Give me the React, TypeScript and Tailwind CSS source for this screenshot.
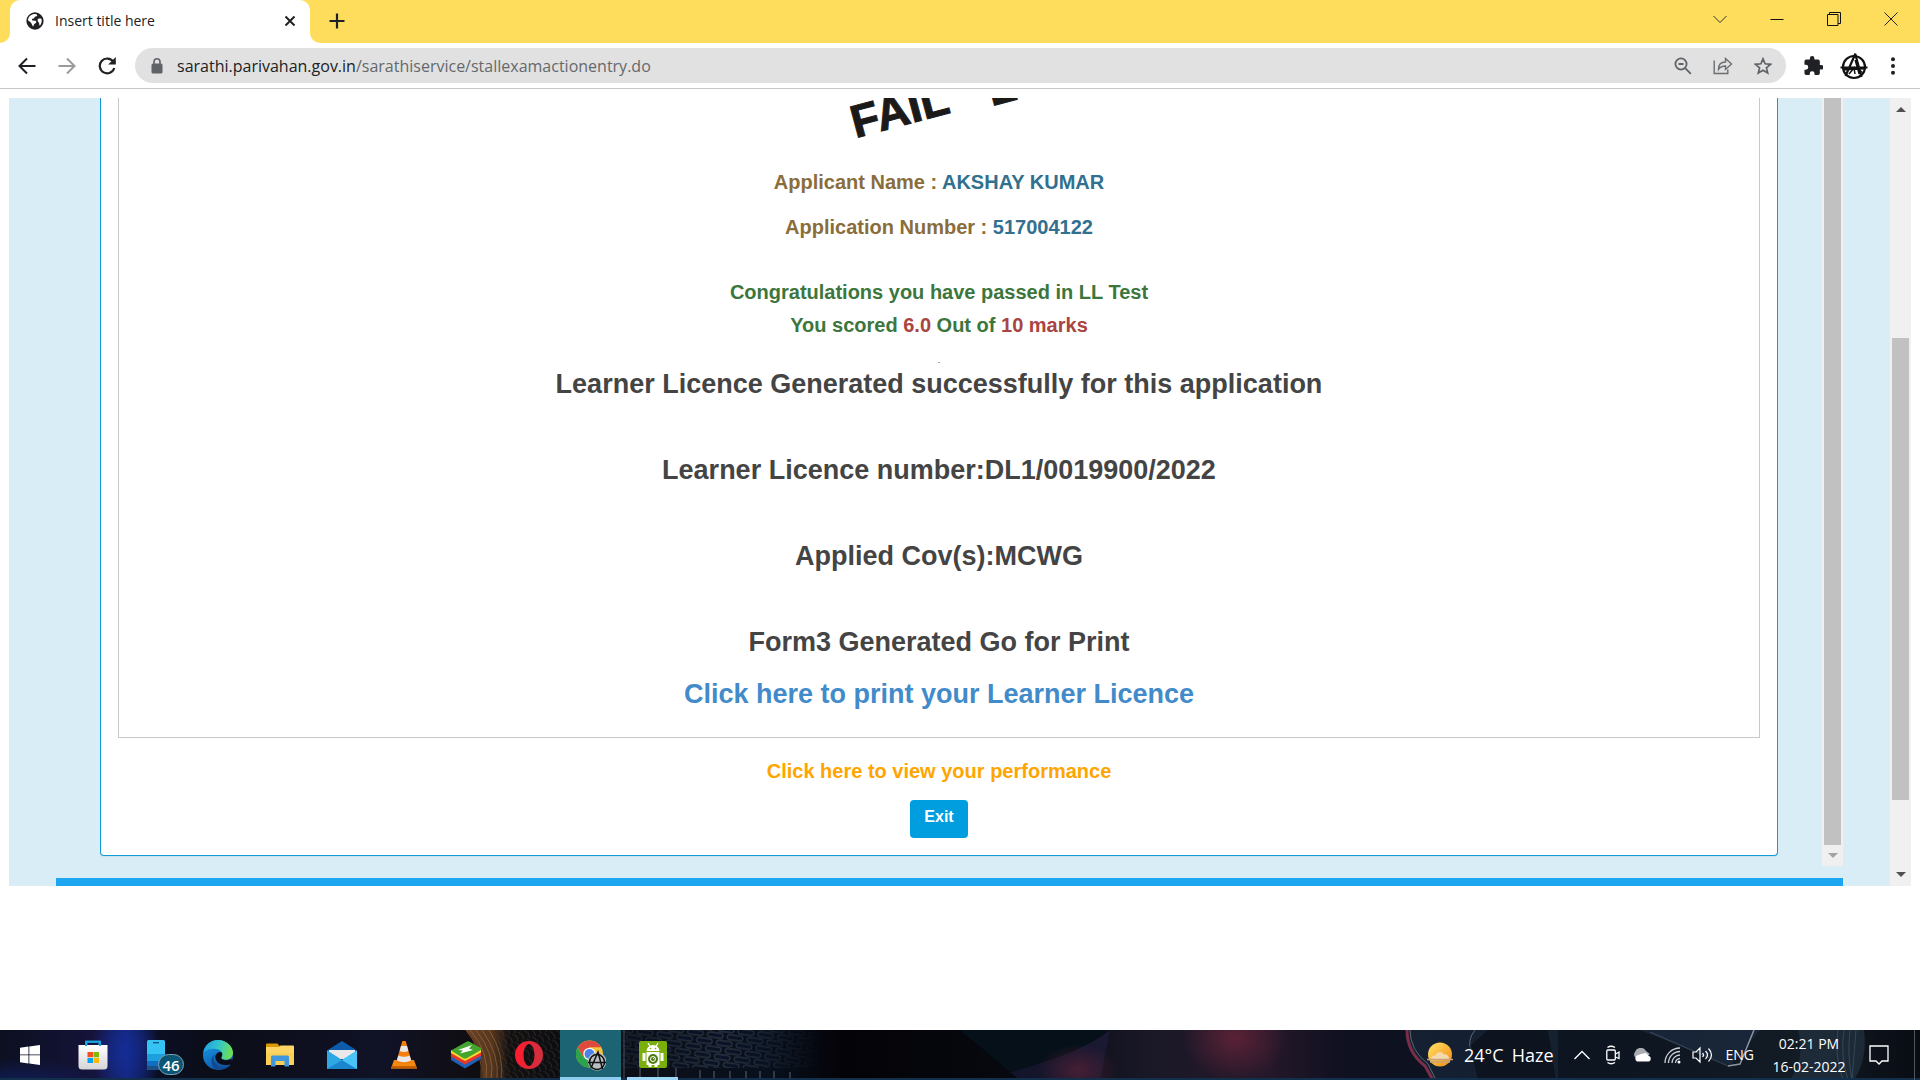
import React from "react";

function Globe() {
  return (
    <svg viewBox="0 0 20 20" className="size-[18px]" aria-hidden="true">
      <circle cx="10" cy="10" r="9.6" fill="#202124" />
      <path d="M10 2.2c2.600 0 3 1.200 2 2.200-.8.8-2.600.4-2.600 1.800 0 1.600-2.800.6-2.800 2.400 0 1.400 3.400.6 4.400 1.400 1.400 1-.2 2.600-1.600 3.200-1.200.5-.6 2-1.400 2.800-1.600-1.200-1.400-3.400-3-4.600C3.800 10.500 2.200 10 2.200 9 2.500 5 6 2.200 10 2.200zM13.500 7.500c1.400-.5 2.800-.6 3.600.1.900 2.800.3 5.400-1.700 7.600-1-.6-.4-2.400-1.200-3.400-.8-1-2.200-3-.7-4.300z" fill="#fff" />
    </svg>
  );
}

function Anarchy({ className }: { className: string }) {
  return (
    <svg viewBox="0 0 28 28" className={className} fill="none" stroke="#111" aria-hidden="true">
      <circle cx="14" cy="15" r="11" strokeWidth="2.200" />
      <path d="M5.500 24 15.500 1.500M15.300 2 21.500 25M15.500 8l4 14M0.500 15.500h27M4 17.500l20-1" strokeWidth="2.200" />
      <path d="M9 22l5-6 1 6M17 16l6 5" strokeWidth="1.500" />
    </svg>
  );
}

function TabStrip() {
  return (
    <header className="flex h-[43px] shrink-0 items-stretch bg-[#ffdd5c] text-[#202124]">
      <div className="flex w-[10px] bg-white">
        <span className="flex-1 rounded-br-[10px] bg-[#ffdd5c]" />
      </div>
      <div className="flex w-[300px] bg-[#ffdd5c]">
        <div className="flex flex-1 items-center rounded-t-[10px] bg-white pl-4 pr-3 pb-[2px]">
          <Globe />
          <span className="ml-[11px] flex-1 font-['Open_Sans','Noto_Sans',sans-serif] text-sm">Insert title here</span>
          <button type="button" aria-label="Close tab" className="flex size-4 items-center justify-center">
            <svg viewBox="0 0 12 12" className="size-3" stroke="#202124" strokeWidth="2"><path d="M1.500 1.500l9 9M10.500 1.500l-9 9" /></svg>
          </button>
        </div>
      </div>
      <div className="flex w-[10px] bg-white">
        <span className="flex-1 rounded-bl-[10px] bg-[#ffdd5c]" />
      </div>
      <button type="button" aria-label="New tab" className="ml-[7px] flex w-5 items-center justify-center pb-px">
        <svg viewBox="0 0 16 16" className="size-4" stroke="#202124" strokeWidth="2.200"><path d="M8 0.500v15M.5 8h15" /></svg>
      </button>
      <div className="flex-1" />
      <div className="flex items-center pr-px pb-[6px]">
        <button type="button" aria-label="Search tabs" className="flex w-[57px] justify-center">
          <svg viewBox="0 0 14 14" className="size-[14px]" fill="none" stroke="#333"><path d="M.5 4l6.500 6.500L13.500 4" /></svg>
        </button>
        <button type="button" aria-label="Minimize" className="flex w-[57px] justify-center">
          <svg viewBox="0 0 14 14" className="size-[14px]" stroke="#111"><path d="M.5 7.500h13" /></svg>
        </button>
        <button type="button" aria-label="Restore" className="flex w-[57px] justify-center">
          <svg viewBox="0 0 14 14" className="size-[14px]" fill="none" stroke="#111"><path d="M.5 2.500h10.500v11H.5zM2.500 2.500v-2h11v11h-2.500" /></svg>
        </button>
        <button type="button" aria-label="Close" className="flex w-[57px] justify-center">
          <svg viewBox="0 0 14 14" className="size-[14px]" stroke="#222"><path d="M.5.5l13 13M13.500.5l-13 13" /></svg>
        </button>
      </div>
    </header>
  );
}

function Toolbar() {
  return (
    <nav className="flex h-[46px] shrink-0 items-center border-b border-[#c8c8c8] bg-white">
      <button type="button" aria-label="Back" className="flex w-10 justify-center pl-[14px]">
        <svg viewBox="0 0 18 18" className="size-[18px]" fill="none" stroke="#202124" strokeWidth="2"><path d="M17.500 9H2M9 1.500L1.500 9 9 16.500" /></svg>
      </button>
      <button type="button" aria-label="Forward" className="flex w-10 justify-center pl-[14px]">
        <svg viewBox="0 0 18 18" className="size-[18px]" fill="none" stroke="#9a9b9d" strokeWidth="2"><path d="M.5 9H16M9 1.500L16.500 9 9 16.500" /></svg>
      </button>
      <button type="button" aria-label="Reload" className="flex w-10 justify-center pl-[14px]">
        <svg viewBox="0 0 18 18" className="size-[18px]" fill="none" stroke="#202124" strokeWidth="2.200"><path d="M15.200 4.600A7.400 7.400 0 1 0 16.300 11" /><path d="M17.800 0v7.600h-7.600z" fill="#202124" stroke="none" /></svg>
      </button>
      <div className="ml-[15px] flex h-[35px] flex-1 items-center rounded-full bg-[#e1e1e1] pl-4 pr-[3px]">
        <svg viewBox="0 0 12 16" className="h-4 w-3" aria-hidden="true"><rect x="0.500" y="5.500" width="11" height="10" rx="1.500" fill="#5f6368" /><path d="M3 6V3.800a3 3 0 0 1 6 0V6" fill="none" stroke="#5f6368" strokeWidth="1.600" /></svg>
        <div className="ml-[14px] flex-1 font-['Open_Sans','Noto_Sans',sans-serif] text-base leading-6 text-[#65686c]">
          <span className="text-[#202124]">sarathi.parivahan.gov.in</span>/sarathiservice/stallexamactionentry.do
        </div>
        <button type="button" aria-label="Zoom" className="flex w-10 justify-center">
          <svg viewBox="0 0 18 18" className="size-[18px]" fill="none" stroke="#5f6368" strokeWidth="1.800"><circle cx="7" cy="7" r="5.600" /><path d="M11.200 11.200l5.600 5.600M4.500 7h5" /></svg>
        </button>
        <button type="button" aria-label="Share" className="flex w-10 justify-center">
          <svg viewBox="0 0 20 18" className="h-[18px] w-5" fill="none" stroke="#6b6e72" strokeWidth="1.400"><path d="M1.200 3.500v13h13.600v-4M5.500 12.500c0-5 2.500-7.500 7-7.500V1.500L18.500 7l-6 5.500V9c-3.500 0-5.500 1-7 3.500z" /></svg>
        </button>
        <button type="button" aria-label="Bookmark" className="flex w-10 justify-center">
          <svg viewBox="0 0 18 18" className="size-[18px]" fill="none" stroke="#5f6368" strokeWidth="1.700"><path d="M9 1.800l2.100 5 5.400.5-4.100 3.500 1.300 5.300L9 13.300l-4.700 2.800 1.300-5.300-4.100-3.500 5.400-.5z" /></svg>
        </button>
      </div>
      <button type="button" aria-label="Extensions" className="flex w-[54px] justify-center">
        <svg viewBox="1.500 1 21 21" className="size-[19px]" fill="#202124"><path d="M20.500 11H19V7a2 2 0 0 0-2-2h-4V3.500a2.500 2.500 0 0 0-5 0V5H4a2 2 0 0 0-2 2v3.800h1.500a2.700 2.700 0 0 1 0 5.400H2V20a2 2 0 0 0 2 2h3.800v-1.500a2.700 2.700 0 0 1 5.400 0V22H17a2 2 0 0 0 2-2v-4h1.500a2.500 2.500 0 0 0 0-5z" /></svg>
      </button>
      <button type="button" aria-label="Profile"><Anarchy className="size-7" /></button>
      <button type="button" aria-label="Menu" className="mr-[22px] ml-5 flex w-[10px] justify-center">
        <svg viewBox="0 0 4 18" className="h-[18px] w-1" fill="#202124"><circle cx="2" cy="2.300" r="2" /><circle cx="2" cy="9" r="2" /><circle cx="2" cy="15.700" r="2" /></svg>
      </button>
    </nav>
  );
}

function Stamp() {
  return (
    <div aria-hidden="true" className="relative h-[46px] w-[200px] self-center overflow-hidden text-[46px] leading-[44px] font-bold text-[#1c1a19] [-webkit-text-stroke:1px_#1c1a19]">
      <span className="absolute top-[2px] left-[18px] origin-bottom-left rotate-[-15deg]">FAIL</span>
      <span className="absolute top-[-30px] left-[154px] origin-bottom-left rotate-[-15deg]">L</span>
    </div>
  );
}

function Result() {
  return (
    <main className="flex flex-1 justify-center pl-[91px] pr-[44px]">
      <section className="flex flex-1 flex-col self-start rounded-b-[4px] border border-t-0 border-[#0f9bd7] bg-white px-[17px] pb-[17px] text-center shadow-[0_1px_1px_rgba(0,0,0,0.05)]">
        <div className="flex flex-col border border-t-0 border-[#c8c8c8] pb-[23px]">
          <Stamp />
          <p className="mt-[23px] text-xl leading-[30px] font-bold text-[#8a6d3b]">Applicant Name : <span className="text-[#31708f]">AKSHAY KUMAR</span></p>
          <p className="mt-[15px] text-xl leading-[30px] font-bold text-[#8a6d3b]">Application Number : <span className="text-[#31708f]">517004122</span></p>
          <p className="mt-[34px] text-xl leading-[33px] font-bold text-[#3c763d]">Congratulations you have passed in LL Test<br />You scored <span className="text-[#a94442]">6.0</span> Out of <span className="text-[#a94442]">10 marks</span></p>
          <span className="mt-5 h-px w-[2px] self-center bg-[#b5a583]" />
          <h2 className="mt-px text-[27px] leading-[40px] font-bold text-[#444]">Learner Licence Generated successfully for this application</h2>
          <h2 className="mt-[46px] text-[27px] leading-[40px] font-bold text-[#444]">Learner Licence number:DL1/0019900/2022</h2>
          <h2 className="mt-[46px] text-[27px] leading-[40px] font-bold text-[#444]">Applied Cov(s):MCWG</h2>
          <h2 className="mt-[46px] text-[27px] leading-[40px] font-bold text-[#444]">Form3 Generated Go for Print</h2>
          <a href="#print" className="mt-3 self-center text-[27px] leading-[40px] font-bold text-[#428bca]">Click here to print your Learner Licence</a>
        </div>
        <a href="#performance" className="mt-[18px] self-center text-xl leading-[30px] font-bold text-[#ffa500]">Click here to view your performance</a>
        <button type="button" className="mt-[14px] h-[38px] self-center rounded-[4px] bg-[#009ddf] px-[14px] pb-1 text-base leading-6 font-bold text-white">Exit</button>
      </section>
    </main>
  );
}

function Arrow({ down, color }: { down?: boolean; color: string }) {
  return (
    <svg viewBox="0 0 10 5" className="h-[5px] w-[10px]" fill={color} aria-hidden="true">
      <path d={down ? "M0 0h10L5 5z" : "M0 5h10L5 0z"} />
    </svg>
  );
}

function Page() {
  return (
    <div className="mx-[9px] mt-[9px] flex h-[788px] shrink-0 bg-[#d9edf6]">
      <div className="flex flex-1 flex-col">
        <div className="flex flex-1 justify-end pr-[47px]">
          <div className="flex flex-1"><Result /></div>
          <div className="flex h-[768px] w-[21px] flex-col items-center bg-[#f0f0f0]">
            <div className="h-[747px] w-[17px] bg-[#c1c1c1]" />
            <div className="flex flex-1 items-center"><Arrow down color="#a3a3a3" /></div>
          </div>
        </div>
        <div className="mr-[47px] ml-[47px] h-2 shrink-0 bg-[#1ca6f0]" />
      </div>
      <div className="flex w-[21px] flex-col items-center bg-[#f0f0f0]">
        <div className="flex h-[22px] items-center"><Arrow color="#505050" /></div>
        <div className="mt-[218px] h-[462px] w-[17px] bg-[#c1c1c1]" />
        <div className="flex-1" />
        <div className="flex h-6 items-center"><Arrow down color="#505050" /></div>
      </div>
    </div>
  );
}

function Wallpaper() {
  return (
    <svg viewBox="0 0 1920 50" preserveAspectRatio="none" className="absolute inset-0 h-full w-full" aria-hidden="true">
      <defs>
        <linearGradient id="base">
          <stop offset="0" stopColor="#0c1020" /><stop offset=".05" stopColor="#15133a" /><stop offset=".066" stopColor="#14267c" /><stop offset=".082" stopColor="#0b0f24" />
          <stop offset=".11" stopColor="#0b0d17" /><stop offset=".2" stopColor="#101226" /><stop offset=".25" stopColor="#100d10" /><stop offset=".4" stopColor="#08101d" />
          <stop offset=".44" stopColor="#040307" /><stop offset=".53" stopColor="#06090f" /><stop offset=".6" stopColor="#1a1828" /><stop offset=".66" stopColor="#25182a" />
          <stop offset=".7" stopColor="#0f1020" /><stop offset=".76" stopColor="#0d1320" /><stop offset=".86" stopColor="#0e1622" /><stop offset=".94" stopColor="#131b25" /><stop offset="1" stopColor="#090c13" />
        </linearGradient>
        <radialGradient id="blue"><stop offset="0" stopColor="#142d96" stopOpacity=".9" /><stop offset="1" stopColor="#142d96" stopOpacity="0" /></radialGradient>
        <radialGradient id="red"><stop offset="0" stopColor="#652338" stopOpacity=".85" /><stop offset="1" stopColor="#652338" stopOpacity="0" /></radialGradient>
        <linearGradient id="copper"><stop offset="0" stopColor="#6b4228" /><stop offset=".28" stopColor="#54361f" /><stop offset=".45" stopColor="#14100f" /><stop offset="1" stopColor="#0c0c10" /></linearGradient>
        <pattern id="weave" width="6" height="9" patternUnits="userSpaceOnUse" patternTransform="rotate(-18)"><path d="M0 0q5 4 3 9" fill="none" stroke="#4b4a50" strokeWidth=".8" opacity=".6" /></pattern>
        <pattern id="mesh" width="20" height="14" patternUnits="userSpaceOnUse" patternTransform="rotate(8)"><rect x="1" y="1" width="16" height="5" rx="2.500" fill="#0a1426" stroke="#3c4656" /><rect x="-9" y="8" width="16" height="5" rx="2.500" fill="#0a1426" stroke="#3c4656" /><rect x="11" y="8" width="16" height="5" rx="2.500" fill="#0a1426" stroke="#3c4656" /></pattern>
        <linearGradient id="fade"><stop offset="0" stopColor="#777" /><stop offset=".5" stopColor="#fff" /><stop offset="1" stopColor="#000" /></linearGradient>
        <mask id="meshMask"><rect x="622" width="200" height="50" fill="url(#fade)" /></mask>
      </defs>
      <rect width="1920" height="50" fill="url(#base)" />
      <ellipse cx="125" cy="22" rx="36" ry="44" fill="url(#blue)" />
      <ellipse cx="10" cy="55" rx="100" ry="28" fill="url(#blue)" opacity=".5" />
      <path d="M466 0h95v50h-79q2-30-16-50z" fill="url(#copper)" />
      <path d="M466 0q18 22 15 50M470 0q20 22 16 50M476 0q20 25 15 50M482 0q18 25 15 50M489 0q16 25 12 50" fill="none" stroke="#a8713f" strokeWidth="1" opacity=".6" />
      <rect x="498" width="64" height="50" fill="url(#weave)" />
      <rect x="622" width="200" height="38" fill="url(#mesh)" mask="url(#meshMask)" />
      <path d="M624 0v50" stroke="#44505f" />
      <path d="M640 50v-12M658 50v-14M676 50v-12M700 50v-10M714 50v-9M730 50v-9M746 50v-9M760 50v-9M774 50v-9M790 50v-8" stroke="#3c4859" strokeWidth="1.500" />
      <path d="M1110 0L1010 42l10 8h80z" fill="#202044" opacity=".5" />
      <path d="M960 0h150q-30 24-100 42z" fill="#061019" />
      <ellipse cx="1078" cy="40" rx="40" ry="26" fill="url(#red)" opacity=".7" />
      <ellipse cx="1235" cy="8" rx="52" ry="44" fill="url(#red)" />
      <path d="M1407 0q0 22 20 38l6 12h125V0z" fill="#1c2b40" opacity=".55" />
      <path d="M1407 0q0 22 18 36l8 14" fill="none" stroke="#7a2e48" strokeWidth="3" />
      <path d="M1410 0q0 20 18 34l8 16M1475 0q-8 10-4 20" fill="none" stroke="#7d8696" opacity=".7" />
      <path d="M1478 50l-8-34 18-16h60l8 50z" fill="#0b1019" opacity=".75" />
      <path d="M1640 0l90 36 30-36z" fill="#1c2b40" opacity=".75" />
      <path d="M1728 36l12-2 14-34" fill="none" stroke="#8b94a0" strokeWidth="1.500" />
      <path d="M1650 2l78 34" fill="none" stroke="#4c5868" opacity=".7" />
      <path d="M1790 50q16-24 8-50h66q4 28-10 50z" fill="#223242" opacity=".7" />
      <path d="M1838 0q-4 25 5 50M1844 0q-4 25 4 50M1850 0q-3 25 2 50M1856 0q-2 25-4 50" fill="none" stroke="#5f7284" strokeWidth=".8" opacity=".5" />
      <rect y="48" width="1920" height="2" fill="#12304b" />
    </svg>
  );
}

function StartIcon() {
  return <svg viewBox="0 0 20 20" className="size-5" fill="#fff"><path d="M0 2.800L8.500 1.600v7.800H0zM9.300 1.500L20 0v9.400H9.300zM0 10.300h8.500v8.200L0 17.300zM9.300 10.300H20V20L9.300 18.600z" /></svg>;
}
function StoreIcon() {
  return (
    <svg viewBox="0 0 30 30" className="size-[30px]">
      <defs><linearGradient id="bag" x2="0" y2="1"><stop offset="0" stopColor="#fff" /><stop offset="1" stopColor="#d5d5d7" /></linearGradient></defs>
      <path d="M8.500 8V1.800h13V8" fill="none" stroke="#1da3e0" strokeWidth="2" />
      <path d="M.5 5h29v21a3.500 3.500 0 0 1-3.500 3.500H4A3.500 3.500 0 0 1 .5 26z" fill="url(#bag)" />
      <path d="M8 6V1.800h14V6" fill="none" stroke="#1da3e0" strokeWidth="2" />
      <path d="M9.500 12H15v5.200H9.500z" fill="#f25022" /><path d="M15.500 12H21v5.200h-5.500z" fill="#7fba00" /><path d="M9.500 18H15v5H9.500z" fill="#00a4ef" /><path d="M15.500 18H21v5h-5.500z" fill="#ffb900" />
    </svg>
  );
}
function PhoneIcon() {
  return (
    <svg viewBox="0 0 18 30" className="h-[30px] w-[18px]">
      <rect width="18" height="30" rx="1.500" fill="#35c3f3" /><path d="M0 14h18v7H0z" fill="#1f9ede" /><path d="M0 21h18v5H0z" fill="#0f6fc0" /><path d="M0 26h18v2.500a1.500 1.500 0 0 1-1.500 1.500h-15A1.500 1.500 0 0 1 0 28.500z" fill="#1d5185" /><path d="M6 2.700h6" stroke="#0e4a78" strokeWidth="1.200" />
    </svg>
  );
}
function EdgeIcon() {
  return (
    <svg viewBox="0 0 30 30" className="size-[30px]">
      <defs>
        <linearGradient id="e1" x1="0" y1=".3" x2="1" y2=".5"><stop offset="0" stopColor="#1f9ee0" /><stop offset=".5" stopColor="#34c6c9" /><stop offset="1" stopColor="#6fe04c" /></linearGradient>
        <linearGradient id="e2" x1="0" y1="0" x2=".5" y2="1"><stop offset="0" stopColor="#1b9fe6" /><stop offset="1" stopColor="#0c59b0" /></linearGradient>
      </defs>
      <circle cx="15" cy="15" r="15" fill="url(#e2)" />
      <path d="M.3 12.500C1.500 5.200 7.500 0 15 0c9 0 15 6.800 15 12.800 0 4.200-3 7-7 7-3 0-4.800-1.200-4.800-2.200 0-.7 1-1.200 1-3.200 0-2.800-3-5.600-8-5.600-4.700 0-8.700 1.500-10.900 3.700z" fill="url(#e1)" />
      <path d="M11.500 14c-3 6 2.500 13.500 9.500 13.500 2.300 0 4.500-.8 6-2C24 28.500 20 30.200 15.500 30 9 29 5.500 20 11.500 14z" fill="#124a92" />
      <path d="M12 16.500c1-3 3.500-5 6-4.500 1.500.8 1.600 3 .8 4.500-1 1.200-.6 2.300.8 3 2.600 1.200 6 .8 8.600-.8L30 24l-3 1c-6 2.500-14-.5-15-8.500z" fill="#0b0e18" />
      <path d="M12 17c.5 5.500 7 9.500 14.600 7.500q1.400-.5.600 1c-5 4-15.600 1-15.200-8.500z" fill="#14559f" />
    </svg>
  );
}
function FolderIcon() {
  return (
    <svg viewBox="0 0 28 24" className="h-6 w-7">
      <path d="M0 1.500A1 1 0 0 1 1 .5h10.500L14 3.500V8H0z" fill="#d99a00" /><path d="M0 4h13l1.500-1.500H27a1 1 0 0 1 1 1V21a1 1 0 0 1-1 1H0z" fill="#fdd565" /><path d="M0 10h28v11a1 1 0 0 1-1 1H0z" fill="#fbcf55" />
      <path d="M5 23.500V14a1.500 1.500 0 0 1 1.500-1.500h15A1.500 1.500 0 0 1 23 14v9.500h-4.500V18h-9v5.500z" fill="#3f97dd" />
    </svg>
  );
}
function MailIcon() {
  return (
    <svg viewBox="0 0 30 28" className="h-7 w-[30px]">
      <path d="M0 9.500L15 0l15 9.500V14H0z" fill="#0d5ba9" /><path d="M2 9h26v9H2z" fill="#e9e9ec" /><path d="M0 9.500L15 19l15-9.500V28H0z" fill="#33b5ee" /><path d="M0 9.500L15 19 0 28z" fill="#2ea7e5" /><path d="M0 28l15-9 15 9z" fill="#1a86cd" /><path d="M30 9.500V28L15 19z" fill="#48c4f5" />
    </svg>
  );
}
function VlcIcon() {
  return (
    <svg viewBox="0 0 26 28" className="h-7 w-[26px]">
      <path d="M3 19h20l3 8.500H0z" fill="#f28a12" /><path d="M11.300 0h3.400l6 21q-7.700 5-15.400 0z" fill="#f57f0c" /><path d="M10 5h6l1.300 5q-4.300 2-8.600 0zM7.300 14.500q5.700 2.500 11.400 0l1.500 5q-7.200 3.500-14.400 0z" fill="#e8e8ea" /><path d="M0 27.500l1-2.500h24l1 2.500z" fill="#c85e00" />
    </svg>
  );
}
function StacksIcon() {
  return (
    <svg viewBox="0 0 30 28" className="h-7 w-[30px]">
      <path d="M0 19l14 8.500L30 18v-3L0 15z" fill="#1d62b8" /><path d="M0 15.500l14 8L30 15v-3L0 12z" fill="#e8362a" /><path d="M0 12l14 8 16-8.500V8L0 9z" fill="#fbd62e" /><path d="M0 9.500L15 1q2-1.500 4 0L30 7v2l-14 8q-2 1-4 0z" fill="#44a52e" /><path d="M7 9l14-5-3 3.500 4 1.500-13 3.500 3-3z" fill="#fff" />
    </svg>
  );
}
function OperaIcon() {
  return (
    <svg viewBox="0 0 28 28" className="size-7">
      <defs><linearGradient id="op" x2="1"><stop offset="0" stopColor="#ff1b2d" /><stop offset="1" stopColor="#cf3040" /></linearGradient></defs>
      <path fillRule="evenodd" d="M14 0a14 14 0 1 0 0 28 14 14 0 1 0 0-28zm0 3c3 0 5.500 5 5.500 11S17 25 14 25s-5.500-5-5.500-11S11 3 14 3z" fill="url(#op)" />
    </svg>
  );
}
function ChromeIcon() {
  return (
    <svg viewBox="0 0 30 31" className="h-[31px] w-[30px]">
      <circle cx="13.500" cy="14" r="13.500" fill="#f9c338" /><path d="M1.800 7.200A13.500 13.500 0 0 1 25.200 7.200H13.500l-6 10z" fill="#df4a3e" /><path d="M1.800 7.200a13.500 13.500 0 0 0 11.700 20.300l6-10h-12z" fill="#2ba24c" />
      <circle cx="13.500" cy="14" r="6.200" fill="#fff" /><circle cx="13.500" cy="14" r="5" fill="#4a82e8" />
      <circle cx="21" cy="21.500" r="9.300" fill="#b9bec0" /><g fill="none" stroke="#111" strokeWidth="1.500"><circle cx="21" cy="22" r="7.500" /><path d="M15 28l7-16 4.500 17M12 22.500h18" /></g>
    </svg>
  );
}
function AndroidIcon() {
  return (
    <svg viewBox="0 0 28 27" className="h-[27px] w-7">
      <rect width="28" height="27" rx="2" fill="#7aae0a" /><path d="M7.500 10a6.500 6 0 0 1 13 0zM7.500 11h13v13h-13zM3.500 12h3v8h-3zM21.500 12h3v8h-3zM9.500 24h3v2h-3zM15.500 24h3v2h-3z" fill="#fff" /><path d="M9 2l2.500 4M19 2l-2.500 4" stroke="#fff" strokeWidth="1.200" /><circle cx="11.500" cy="7.500" r=".8" fill="#7aae0a" /><circle cx="16.500" cy="7.500" r=".8" fill="#7aae0a" />
      <circle cx="14" cy="18" r="5" fill="#4f7d12" /><circle cx="14" cy="18" r="2.500" fill="none" stroke="#fff" /><path d="M14 18l2-2" stroke="#fff" />
    </svg>
  );
}

function Taskbar() {
  return (
    <footer className="relative flex h-[50px] shrink-0 font-['Open_Sans','Noto_Sans',sans-serif] text-white">
      <Wallpaper />
      <div className="relative flex">
        <button type="button" aria-label="Start" className="flex w-[60px] items-center justify-center"><StartIcon /></button>
        <button type="button" aria-label="Microsoft Store" className="flex w-[66px] items-center justify-center"><StoreIcon /></button>
        <button type="button" aria-label="Your Phone" className="relative flex w-[60px] items-center justify-center">
          <PhoneIcon />
          <span className="absolute top-6 left-8 flex h-[21px] w-[26px] items-center justify-center rounded-full border border-[#7fa3b5] bg-[#0b5675] text-[15px] leading-5 font-semibold">46</span>
        </button>
        <button type="button" aria-label="Edge" className="flex w-[64px] items-center justify-center"><EdgeIcon /></button>
        <button type="button" aria-label="File Explorer" className="flex w-[60px] items-center justify-center"><FolderIcon /></button>
        <button type="button" aria-label="Mail" className="flex w-[64px] items-center justify-center"><MailIcon /></button>
        <button type="button" aria-label="VLC" className="flex w-[60px] items-center justify-center"><VlcIcon /></button>
        <button type="button" aria-label="BlueStacks" className="flex w-[64px] items-center justify-center"><StacksIcon /></button>
        <button type="button" aria-label="Opera" className="flex w-[62px] items-center justify-center"><OperaIcon /></button>
        <button type="button" aria-label="Chrome" className="flex w-[61px] items-center justify-center border-b-[3px] border-[#8ccdf0] bg-[#1c6474] pt-1"><ChromeIcon /></button>
        <button type="button" aria-label="Android Manager" className="mx-[6px] flex w-[51px] items-center justify-center border-b-[3px] border-[#9ed7f7] pt-[2px]"><AndroidIcon /></button>
      </div>
      <div className="flex-1" />
      <div className="relative flex items-center">
        <svg viewBox="0 0 28 26" className="mr-[10px] h-[26px] w-7">
          <defs><linearGradient id="sun" x2="1" y2="1"><stop offset="0" stopColor="#ffe267" /><stop offset="1" stopColor="#f58a12" /></linearGradient></defs>
          <circle cx="14" cy="12.500" r="12" fill="url(#sun)" /><path d="M5 17a4 4 0 0 1 4-3.500 5 5 0 0 1 9-1 4 4 0 0 1 5 4.500z" fill="#f3d9ae" /><path d="M1 17.500h26M4 20h20" stroke="#c8a27a" strokeWidth="1.500" />
        </svg>
        <span className="mr-2 text-lg leading-6">24°C</span>
        <span className="text-lg leading-6">Haze</span>
        <button type="button" aria-label="Show hidden icons" className="ml-5"><svg viewBox="0 0 16 10" className="h-[10px] w-4" fill="none" stroke="#fff" strokeWidth="1.300"><path d="M.5 9L8 1.500 15.500 9" /></svg></button>
        <svg viewBox="0 0 14 20" className="ml-4 h-5 w-[14px]" fill="none" stroke="#fff" strokeWidth="1.300"><rect x=".8" y="5" width="8.500" height="10" rx="1" /><path d="M9.500 9l3.500-2v6.500L9.500 12M1.500 2.500Q5 0 9 2.500M1.500 17.500Q5 20 9 17.500" /></svg>
        <svg viewBox="0 0 20 14" className="ml-3 h-[14px] w-5"><path d="M4 10A4 4 0 0 1 3 4a6 6 0 0 1 11-1l4 3-8 5z" fill="#a9adb3" /><path d="M5 13.500a3.500 3.500 0 0 1 0-6l4-1.500 5-1 3 3a3 3 0 0 1 0 5.500z" fill="#fff" /></svg>
        <svg viewBox="0 0 17 17" className="ml-3 size-[17px]" fill="none" stroke="#cfd3d8" strokeWidth="1.300"><path d="M1 16A15 15 0 0 1 16 1M4.500 16A11.500 11.500 0 0 1 16 4.500M8 16a8 8 0 0 1 8-8M11.500 16a4.500 4.500 0 0 1 4.500-4.500" /><circle cx="15" cy="15" r="1.500" fill="#fff" stroke="none" /></svg>
        <svg viewBox="0 0 21 18" className="ml-[11px] h-[18px] w-[21px]" fill="none" stroke="#fff" strokeWidth="1.200"><path d="M1 6h3l4-4v14l-4-4H1zM10.500 7q2 2 0 4M13.500 5q4 4 0 8M16.500 2.500q6 6.500 0 13" /></svg>
        <span className="ml-[13px] text-sm">ENG</span>
        <div className="ml-[15px] flex w-[80px] flex-col items-center text-sm leading-[23px] whitespace-nowrap"><span>02:21 PM</span><span>16-02-2022</span></div>
        <button type="button" aria-label="Notifications" className="ml-[20px]"><svg viewBox="0 0 20 20" className="size-5" fill="none" stroke="#fff" strokeWidth="1.300"><path d="M1 1h18v15h-6l-3 3-3-3H1z" /></svg></button>
        <span className="mr-[5px] ml-[25px] h-[50px] w-px bg-[#50555d]" />
      </div>
    </footer>
  );
}

export default function App() {
  return (
    <div className="flex min-h-screen flex-col bg-white font-['Liberation_Sans',Arial,sans-serif]">
      <TabStrip />
      <Toolbar />
      <Page />
      <div className="flex-1" />
      <Taskbar />
    </div>
  );
}
